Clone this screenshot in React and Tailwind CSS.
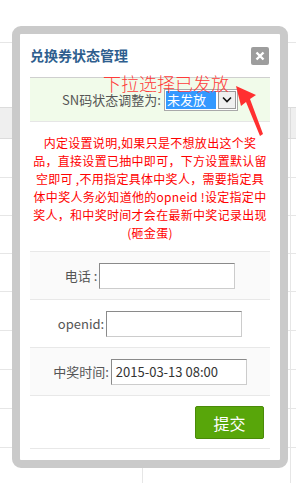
const Row = ({ h, band }) => (
  <div className={`flex border-b border-[#e6e6e6] ${h} ${band ? 'bg-[#efefef]' : ''}`}>
    <div className="w-[143px] border-r border-[#e6e6e6]" />
    <div className="w-[148px] border-r border-[#e6e6e6]" />
    <div className="flex-1" />
  </div>
);

const Field = ({ label, value, bg }) => (
  <div className={`h-[48px] border-t border-[#e8e8e8] flex items-center justify-center gap-[2px] ${bg}`}>
    <span className="text-[13px] text-[#555]">{label}</span>
    <div className="w-[136px] h-[26px] border border-[#ccc] border-t-[#8a8a8a] border-l-[#8a8a8a] bg-white flex items-center pl-[4px] text-[13px] text-[#333]">
      {value}
    </div>
  </div>
);

const App = () => {
  return (
    <div
      className="relative w-[296px] h-[483px] overflow-hidden bg-white"
      style={{ fontFamily: '"Noto Sans CJK SC", "Liberation Sans", sans-serif' }}
    >
      {/* table behind the dialog */}
      <div className="flex flex-col">
        <div className="h-[43px] border-b border-[#e6e6e6]" />
        <div className="h-[64px]" />
        <div className="h-[32px] flex bg-[#efefef] border-y border-[#dcdcdc]">
          <div className="w-[143px] border-r border-[#dcdcdc]" />
          <div className="w-[148px] border-r border-[#dcdcdc]" />
        </div>
        <Row h="h-[39px]" />
        <Row h="h-[38px]" />
        <Row h="h-[38px]" />
        <Row h="h-[38px]" />
        <Row h="h-[39px]" />
        <Row h="h-[39px]" />
        <Row h="h-[39px]" />
        <Row h="h-[39px]" />
        <Row h="h-[39px]" />
      </div>

      {/* dialog */}
      <div className="absolute left-[12px] top-[26px] w-[276px] h-[442px] border-8 border-[#cacaca] rounded-[9px] bg-white">
        <div className="px-[10px] flex flex-col">
          <div className="h-[43px] flex items-center justify-between">
            <span className="text-[14px] font-bold text-[#2e5e8e]">兑换券状态管理</span>
            <button className="w-[18px] h-[18px] mr-[1px] rounded-[2px] bg-[#9d9d9d] text-white flex items-center justify-center">
              <svg width="10" height="10" viewBox="0 0 10 10">
                <path d="M1.5 1.5 L8.5 8.5 M8.5 1.5 L1.5 8.5" stroke="white" strokeWidth="2.4" />
              </svg>
            </button>
          </div>

          <div className="h-[45px] bg-[#f1fbea] border-t border-[#cfcfcf] border-b border-b-[#e6e6e6] flex items-center justify-center gap-[3px]">
            <span className="text-[13px] text-[#555]">SN码状态调整为:</span>
            <div className="w-[74px] h-[22px] border border-[#a9a9a9] bg-white flex items-center p-[1px] gap-[2px]">
              <div className="w-[50px] h-full bg-[#3399ff] text-white text-[13px] leading-[18px] pl-[1px]">未发放</div>
              <div className="flex-1 h-full border border-[#9a9a9a] bg-[#f0f0f0] flex items-center justify-center">
                <svg width="10" height="7" viewBox="0 0 10 7">
                  <path d="M1 1.5 L5 5.5 L9 1.5" stroke="#111" strokeWidth="1.6" fill="none" />
                </svg>
              </div>
            </div>
          </div>

          <div className="pt-[12px] pb-[9px] text-center text-[12px] leading-[18px] tracking-[0.3px] text-[#ff0000] whitespace-nowrap">
            <div>内定设置说明,如果只是不想放出这个奖</div>
            <div>品，直接设置已抽中即可，下方设置默认留</div>
            <div>空即可 ,不用指定具体中奖人，需要指定具</div>
            <div>体中奖人务必知道他的opneid !设定指定中</div>
            <div>奖人，和中奖时间才会在最新中奖记录出现</div>
            <div>(砸金蛋)</div>
          </div>

          <Field label="电话 :" value="" bg="bg-[#fafafa]" />
          <Field label="openid:" value="" bg="bg-white" />
          <Field label="中奖时间:" value="2015-03-13 08:00" bg="bg-[#fafafa]" />

          <div className="h-[54px] border-t border-b border-[#e8e8e8] flex justify-end items-start pt-[10px] pr-[6px]">
            <button className="w-[69px] h-[33px] bg-[#58a60a] border border-[#4a8a08] rounded-[2px] text-white text-[16px]">
              提交
            </button>
          </div>
        </div>
      </div>

      {/* annotation */}
      <div className="absolute left-[103px] top-[73px] text-[18px] leading-[20px] font-light text-[#ff3b3b]">
        下拉选择已发放
      </div>
      <svg className="absolute left-0 top-0" width="296" height="483" viewBox="0 0 296 483">
        <polygon
          points="236,86 256,95 250,99 263,134 260,136 246,102 241,106"
          fill="#ff3030"
        />
      </svg>
    </div>
  );
};

export default App;
